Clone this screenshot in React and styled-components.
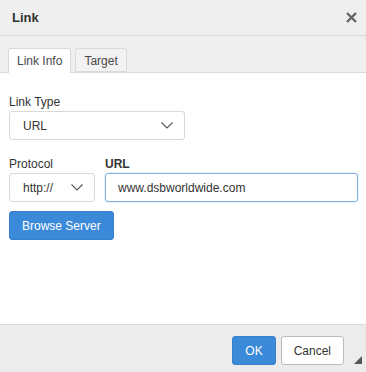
import React from "react";
import styled, { createGlobalStyle } from "styled-components";

const Global = createGlobalStyle`
  html, body { margin: 0; padding: 0; background: #fff; }
  body { font-family: "Liberation Sans", Arial, sans-serif; color: #484848; }
  * { box-sizing: border-box; }
`;

const Dialog = styled.div`
  width: 366px;
  height: 372px;
  display: flex;
  flex-direction: column;
  background: #fff;
  font-size: 12px;
  position: relative;
`;

const Header = styled.div`
  height: 36px;
  flex: none;
  display: flex;
  align-items: center;
  justify-content: space-between;
  padding: 0 8px 0 12px;
  background: #efefef;
  border-bottom: 1px solid #d9d9d9;
`;

const Title = styled.div`
  font-weight: bold;
  font-size: 13px;
  color: #333;
`;

const Close = styled.div`
  width: 14px;
  height: 14px;
  display: flex;
  align-items: center;
  justify-content: center;
`;

const TabStrip = styled.div`
  height: 37px;
  flex: none;
  display: flex;
  align-items: flex-end;
  gap: 4px;
  padding: 0 0 0 8px;
  background: #efefef;
  border-bottom: 1px solid #d9d9d9;
`;

const Tab = styled.div`
  height: ${(p) => (p.$active ? "25px" : "24px")};
  margin-bottom: ${(p) => (p.$active ? "-1px" : "0")};
  padding: 0 8px;
  padding-top: ${(p) => (p.$active ? "0" : "1px")};
  display: flex;
  align-items: center;
  border: 1px solid #d9d9d9;
  border-bottom: ${(p) => (p.$active ? "none" : "1px solid #d9d9d9")};
  border-radius: 3px 3px 0 0;
  background: ${(p) => (p.$active ? "#fff" : "#f2f2f2")};
  color: #484848;
  font-size: 12px;
`;

const Body = styled.div`
  flex: 1;
  display: flex;
  flex-direction: column;
  padding: 22px 8px 0 9px;
`;

const Field = styled.div`
  display: flex;
  flex-direction: column;
  gap: 1px;
  flex: ${(p) => (p.$grow ? 1 : "none")};
`;

const Label = styled.label`
  font-size: 12px;
  line-height: 15px;
  color: #333;
  font-weight: ${(p) => (p.$bold ? "bold" : "normal")};
`;

const Select = styled.div`
  width: ${(p) => p.$w}px;
  height: 29px;
  display: flex;
  align-items: center;
  justify-content: space-between;
  padding: 0 11px 0 13px;
  border: 1px solid #d9d9d9;
  border-radius: 3px;
  background: #fff;
  color: #333;
  font-size: 12px;
`;

const Row = styled.div`
  display: flex;
  gap: 10px;
  margin-top: 17px;
`;

const Input = styled.div`
  height: 29px;
  display: flex;
  align-items: center;
  padding: 0 12px;
  border: 1px solid #7fb0e0;
  border-radius: 3px;
  box-shadow: 0 0 2px rgba(120, 170, 230, 0.6);
  color: #333;
  font-size: 12px;
`;

const Button = styled.div`
  height: 29px;
  display: inline-flex;
  align-items: center;
  justify-content: center;
  padding: 0 ${(p) => p.$px || 12}px;
  border-radius: 3px;
  font-size: 12px;
  background: ${(p) => (p.$primary ? "#3b89d9" : "#fff")};
  color: ${(p) => (p.$primary ? "#fff" : "#333")};
  border: 1px solid ${(p) => (p.$primary ? "#3a7fcb" : "#bcbcbc")};
`;

const BrowseWrap = styled.div`
  margin-top: 9px;
  display: flex;
`;

const Footer = styled.div`
  height: 48px;
  flex: none;
  display: flex;
  justify-content: flex-end;
  align-items: flex-start;
  gap: 5px;
  padding: 11px 22px 0 0;
  background: #ececec;
  border-top: 1px solid #dcdcdc;
`;

const Grip = styled.div`
  position: absolute;
  right: 4px;
  bottom: 8px;
  width: 0;
  height: 0;
  border-left: 8px solid transparent;
  border-bottom: 8px solid #555;
`;

const Chevron = () => (
  <svg width="12" height="7" viewBox="0 0 12 7">
    <path d="M0.5 0.5 L6 6 L11.5 0.5" fill="none" stroke="#555" strokeWidth="1.1" />
  </svg>
);

export default function App() {
  return (
    <>
      <Global />
      <Dialog>
        <Header>
          <Title>Link</Title>
          <Close>
            <svg width="11" height="11" viewBox="0 0 11 11">
              <path d="M1 1 L10 10 M10 1 L1 10" stroke="#666" strokeWidth="2.4" />
            </svg>
          </Close>
        </Header>
        <TabStrip>
          <Tab $active>Link Info</Tab>
          <Tab>Target</Tab>
        </TabStrip>
        <Body>
          <Field>
            <Label>Link Type</Label>
            <Select $w={176}>
              <span>URL</span>
              <Chevron />
            </Select>
          </Field>
          <Row>
            <Field>
              <Label>Protocol</Label>
              <Select $w={86}>
                <span>http://</span>
                <Chevron />
              </Select>
            </Field>
            <Field $grow>
              <Label $bold>URL</Label>
              <Input>www.dsbworldwide.com</Input>
            </Field>
          </Row>
          <BrowseWrap>
            <Button $primary $px={12}>Browse Server</Button>
          </BrowseWrap>
        </Body>
        <Footer>
          <Button $primary $px={12}>OK</Button>
          <Button $px={12}>Cancel</Button>
        </Footer>
        <Grip />
      </Dialog>
    </>
  );
}
